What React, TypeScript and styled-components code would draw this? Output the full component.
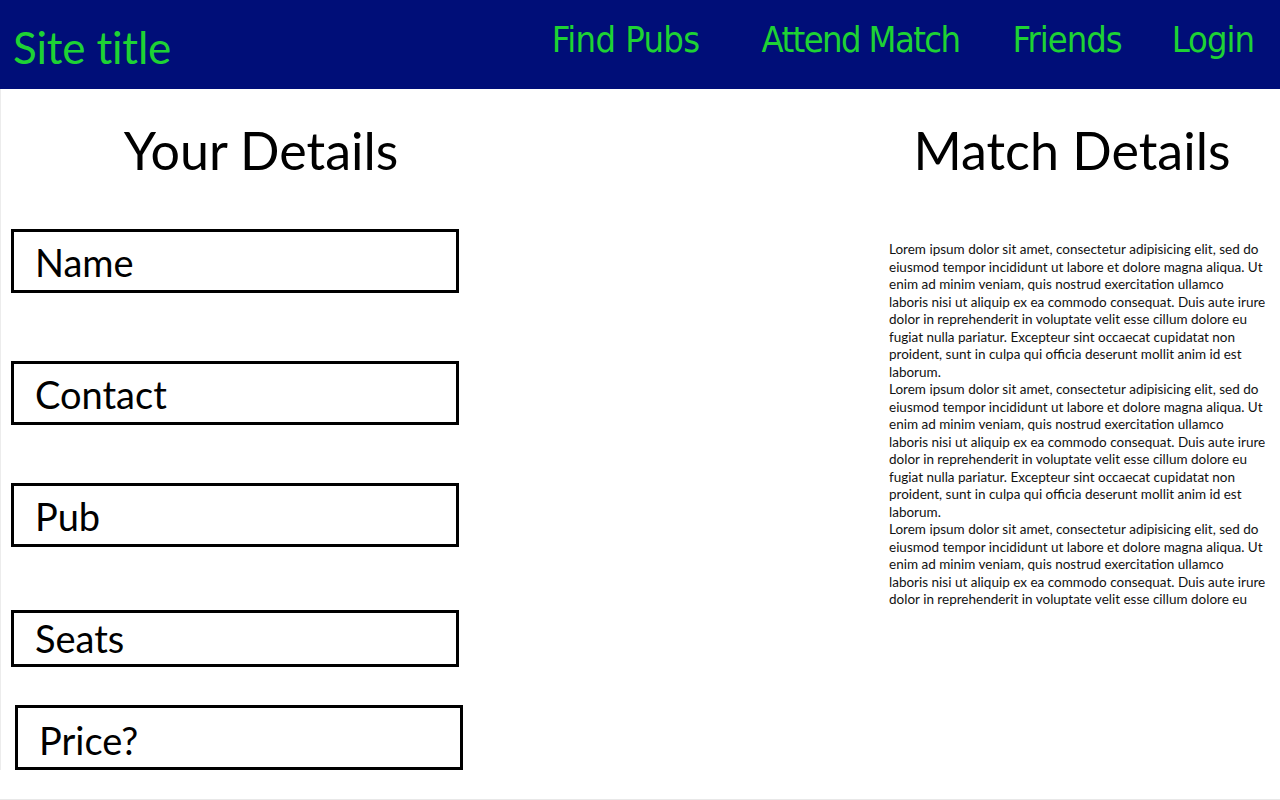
import React from "react";
import styled, { createGlobalStyle } from "styled-components";

const Global = createGlobalStyle`
  html, body { margin: 0; padding: 0; background: #fff; }
  body { font-family: Lato, "Noto Sans", sans-serif; color: #000; }
  * { box-sizing: border-box; }
`;

const Page = styled.div`
  width: 1280px;
  height: 800px;
  overflow: hidden;
  border-bottom: 1px solid #e8e8e8;
`;

const Header = styled.header`
  height: 89px;
  background: #000e78;
  display: flex;
  align-items: flex-start;
  justify-content: space-between;
  padding: 0 26px 0 13px;
`;

const SiteTitle = styled.div`
  color: #1ed234;
  font-size: 44px;
  line-height: 1;
  margin-top: 25px;
  letter-spacing: -0.2px;
`;

const Nav = styled.nav`
  display: flex;
  margin-top: 22px;
`;

const NavLink = styled.a<{ $gap: number; $ls: number }>`
  color: #1ed234;
  font-size: 36px;
  line-height: 1;
  font-family: "DejaVu Sans Condensed", Lato, sans-serif;
  letter-spacing: ${(p) => p.$ls}px;
  margin-left: ${(p) => p.$gap}px;
`;

const Main = styled.main`
  display: flex;
  align-items: flex-start;
  box-shadow: inset 1px 0 0 #ececec;
`;

const LeftCol = styled.section`
  width: 522px;
  padding-left: 11px;
`;

const Heading = styled.h1`
  margin: 0;
  font-weight: 400;
  font-size: 52px;
  line-height: 1;
  text-align: center;
  padding-top: 35px;
`;

const LeftHeading = styled(Heading)`
  margin-left: -11px;
`;

const FieldBox = styled.div<{ $top: number; $h: number; $shift?: number; $pt: number }>`
  width: 448px;
  height: ${(p) => p.$h}px;
  margin-top: ${(p) => p.$top}px;
  margin-left: ${(p) => p.$shift || 0}px;
  border: 3px solid #000;
  padding: ${(p) => p.$pt}px 0 0 21px;
  font-size: 38px;
  line-height: 1;
`;

const RightCol = styled.section`
  margin-left: auto;
  width: 416px;
`;

const Body = styled.div`
  margin: 65px 0 0 25px;
  width: 391px;
  font-size: 13.5px;
  line-height: 17.5px;
  color: #111;
`;

const Para = styled.p`
  margin: 0;
`;

const Line = styled.span`
  display: block;
  white-space: nowrap;
`;

const loremLines = [
  "Lorem ipsum dolor sit amet, consectetur adipisicing elit, sed do",
  "eiusmod tempor incididunt ut labore et dolore magna aliqua. Ut",
  "enim ad minim veniam, quis nostrud exercitation ullamco",
  "laboris nisi ut aliquip ex ea commodo consequat. Duis aute irure",
  "dolor in reprehenderit in voluptate velit esse cillum dolore eu",
  "fugiat nulla pariatur. Excepteur sint occaecat cupidatat non",
  "proident, sunt in culpa qui officia deserunt mollit anim id est",
  "laborum.",
];

const paragraphs = [loremLines, loremLines, loremLines.slice(0, 5)];

const fields = [
  { label: "Name", top: 53, h: 64, pt: 11 },
  { label: "Contact", top: 68, h: 64, pt: 11 },
  { label: "Pub", top: 58, h: 64, pt: 11 },
  { label: "Seats", top: 63, h: 57, pt: 6 },
  { label: "Price?", top: 38, h: 65, pt: 13, shift: 4 },
];

const links = [
  { label: "Find Pubs", gap: 0, ls: -0.6 },
  { label: "Attend Match", gap: 62, ls: -1.6 },
  { label: "Friends", gap: 53, ls: -1 },
  { label: "Login", gap: 50, ls: -1 },
];

export default function App() {
  return (
    <Page>
      <Global />
      <Header>
        <SiteTitle>Site title</SiteTitle>
        <Nav>
          {links.map((l) => (
            <NavLink key={l.label} $gap={l.gap} $ls={l.ls}>
              {l.label}
            </NavLink>
          ))}
        </Nav>
      </Header>
      <Main>
        <LeftCol>
          <LeftHeading>Your Details</LeftHeading>
          {fields.map((f) => (
            <FieldBox key={f.label} $top={f.top} $h={f.h} $pt={f.pt} $shift={f.shift}>
              {f.label}
            </FieldBox>
          ))}
        </LeftCol>
        <RightCol>
          <Heading>Match Details</Heading>
          <Body>
            {paragraphs.map((lines, i) => (
              <Para key={i}>
                {lines.map((t) => (
                  <Line key={t}>{t}</Line>
                ))}
              </Para>
            ))}
          </Body>
        </RightCol>
      </Main>
    </Page>
  );
}
